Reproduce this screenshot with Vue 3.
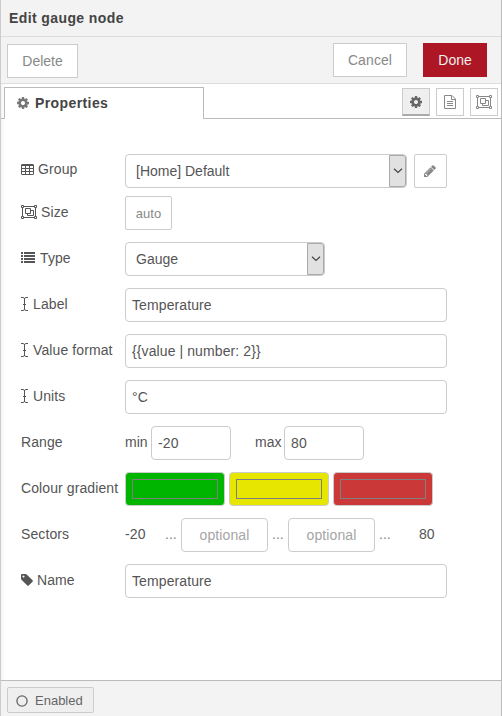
<script setup>
import { ref, h } from 'vue'

const COG = 'M1152 896q0-106-75-181t-181-75-181 75-75 181 75 181 181 75 181-75 75-181zm512-109v222q0 12-8 23t-20 13l-185 28q-19 54-39 91 35 50 107 138 10 12 10 25t-9 23q-27 37-99 108t-94 71q-12 0-26-9l-138-108q-44 23-91 38-16 136-29 186-7 28-36 28h-222q-14 0-24.500-8.500t-11.500-21.500l-28-184q-49-16-90-37l-141 107q-10 9-25 9-14 0-25-11-126-114-165-168-7-10-7-23 0-12 8-23 15-21 51-66.500t54-70.500q-27-50-41-99l-183-27q-13-2-21-12.500t-8-23.500v-222q0-12 8-23t19-13l186-28q14-46 39-92-40-57-107-138-10-12-10-24 0-10 9-23 26-36 98.500-107.500t94.500-71.500q13 0 26 10l138 107q44-23 91-38 16-136 29-186 7-28 36-28h222q14 0 24.500 8.500t11.500 21.500l28 184q49 16 90 37l142-107q9-9 24-9 13 0 25 10 129 119 165 170 7 8 7 22 0 12-8 23-15 21-51 66.500t-54 70.500q26 50 41 98l183 28q13 2 21 12.500t8 23.500z'
const PENCIL = 'M491 1536l91-91-235-235-91 91v107h128v128h107zm523-928q0-22-22-22-10 0-17 7l-542 542q-7 7-7 17 0 22 22 22 10 0 17-7l542-542q7-7 7-17zm-54-192l416 416-832 832h-416v-416zm683 96q0 53-37 90l-166 166-416-416 166-165q36-38 90-38 53 0 91 38l235 234q37 39 37 91z'
const TAG = 'M576 448q0-53-37.500-90.500t-90.500-37.500-90.500 37.500-37.500 90.500 37.500 90.500 90.500 37.500 90.500-37.500 37.500-90.500zm1067 576q0 53-37 90l-491 492q-39 37-91 37-53 0-90-37l-715-716q-38-37-64.500-101t-26.500-117v-416q0-52 38-90t90-38h416q53 0 117 26.500t102 64.500l715 714q37 39 37 91z'

const line = d => h('path', { d, fill: 'none', stroke: 'currentColor' })
const solid = d => h('path', { d, fill: 'currentColor' })

const ICONS = {
  cog: { w: 12, h: 14, box: '128 0 1536 1792', draw: () => [solid(COG)] },
  pencil: { w: 12, h: 14, box: '128 0 1536 1792', draw: () => [solid(PENCIL)] },
  tag: { w: 12, h: 14, box: '128 0 1536 1792', draw: () => [solid(TAG)] },
  table: { w: 13, h: 14, draw: () => [line('M1 2.500H12Q12.500 2.500 12.500 3V12Q12.500 12.500 12 12.500H1Q.5 12.500 .5 12V3Q.5 2.500 1 2.500ZM0 3.500H13M0 6.500H13M0 9.500H13M4.500 4V12M8.500 4V12')] },
  group: { w: 16, h: 14, draw: () => [line('M.5 .5h2v2h-2zM13.500 .5h2v2h-2zM.5 11.500h2v2h-2zM13.500 11.500h2v2h-2zM3 1.500H13M3 12.500H13M1.500 3V11M14.500 3V11M4.500 3.500H9.500V8.500H4.500ZM10 5.500H12.500V10.500H6.500V9')] },
  list: { w: 14, h: 14, draw: () => [solid('M0 1h2v2h-2zM3 1h11v2h-11zM0 4h2v2h-2zM3 4h11v2h-11zM0 7h2v2h-2zM3 7h11v2h-11zM0 10h2v2h-2zM3 10h11v2h-11z')] },
  cursor: { w: 7, h: 14, draw: () => [line('M0 .5H2.200Q3.500 .7 3.500 2Q3.500 .7 4.800 .5H7M0 13.500H2.200Q3.500 13.300 3.500 12Q3.500 13.300 4.800 13.500H7M3.500 1.500V12.500M2 7.500H5')] },
  file: { w: 12, h: 14, draw: () => [line('M.5 .5H8L11.500 4V13.500H.5ZM7.500 .5V4.500H11.500M3 6.500H9M3 8.500H9M3 10.500H9')] },
  ring: { w: 12, h: 12, draw: () => [h('circle', { cx: 6, cy: 6, r: 5.100, fill: 'none', stroke: 'currentColor', 'stroke-width': 1.300 })] },
  chevron: { w: 10, h: 6, draw: () => [h('path', { d: 'M1 .8L5 4.500L9 .8', fill: 'none', stroke: 'currentColor', 'stroke-width': 1.200 })] }
}

const Icon = ({ name }) => {
  const i = ICONS[name]
  return h('svg', { width: i.w, height: i.h, viewBox: i.box || `0 0 ${i.w} ${i.h}`, 'aria-hidden': 'true' }, i.draw())
}
Icon.props = ['name']

const label = ref('Temperature')
const format = ref('{{value | number: 2}}')
const units = ref('°C')
const min = ref('-20')
const max = ref('80')
const name = ref('Temperature')
const colours = ref(['#00b500', '#e6e600', '#ca3838'])
</script>

<template>
  <main class="tray">
    <header class="title">Edit gauge node</header>

    <div class="toolbar">
      <button class="btn delete">Delete</button>
      <button class="btn cancel">Cancel</button>
      <button class="btn done">Done</button>
    </div>

    <nav class="tabs">
      <div class="lead"></div>
      <div class="tab"><Icon name="cog" /><span>Properties</span></div>
      <div class="tools">
        <button class="tool active"><Icon name="cog" /></button>
        <button class="tool"><Icon name="file" /></button>
        <button class="tool"><Icon name="group" /></button>
      </div>
    </nav>

    <form class="form" @submit.prevent>
      <div class="row first">
        <label class="raised"><Icon name="table" />Group</label>
        <div class="select wide"><span>[Home] Default</span><i><Icon name="chevron" /></i></div>
        <button class="square edit"><Icon name="pencil" /></button>
      </div>
      <div class="row">
        <label class="tight"><Icon name="group" />Size</label>
        <button class="square auto">auto</button>
      </div>
      <div class="row">
        <label><Icon name="list" />Type</label>
        <div class="select"><span>Gauge</span><i><Icon name="chevron" /></i></div>
      </div>
      <div class="row">
        <label><Icon name="cursor" />Label</label>
        <input v-model="label" class="field">
      </div>
      <div class="row">
        <label><Icon name="cursor" />Value format</label>
        <input v-model="format" class="field">
      </div>
      <div class="row">
        <label><Icon name="cursor" />Units</label>
        <input v-model="units" class="field">
      </div>
      <div class="row">
        <label>Range</label>
        <span class="min">min</span><input v-model="min" class="field number">
        <span class="max">max</span><input v-model="max" class="field number">
      </div>
      <div class="row swatches">
        <label>Colour gradient</label>
        <div v-for="c in colours" :key="c" class="swatch" :style="{ background: c }"><div></div></div>
      </div>
      <div class="row">
        <label>Sectors</label>
        <span class="low">{{ min }}</span>
        <span class="dots">...</span>
        <input class="field sector" placeholder="optional">
        <span class="dots mid">...</span>
        <input class="field sector" placeholder="optional">
        <span class="dots end">...</span>
        <span class="high">{{ max }}</span>
      </div>
      <div class="row">
        <label class="tight"><Icon name="tag" />Name</label>
        <input v-model="name" class="field">
      </div>
    </form>

    <footer class="footer">
      <button class="enabled"><Icon name="ring" />Enabled</button>
    </footer>
  </main>
</template>

<style>
body { margin: 0; }
</style>

<style scoped>
* { box-sizing: border-box; }
.tray {
  width: 502px;
  height: 716px;
  display: flex;
  flex-direction: column;
  overflow: hidden;
  border-left: 1px solid #ccc;
  border-right: 1px solid #bbb;
  background: linear-gradient(to right, #f4f4f4, #fff 4px);
  color: #555;
  font: 14px/20px "Liberation Sans", Arial, sans-serif;
}
button, input { font: inherit; margin: 0; outline: none; }
svg { display: block; flex: none; }
.title {
  height: 37px;
  padding: 8px;
  background: #f3f3f3;
  border-bottom: 1px solid #ddd;
  color: #444;
  font-weight: bold;
  letter-spacing: 0.4px;
}
.toolbar {
  height: 47px;
  padding: 6px 14px 0 6px;
  display: flex;
  background: #f3f3f3;
  border-bottom: 1px solid #ddd;
}
.btn {
  height: 34px;
  padding: 0;
  border: 1px solid #ccc;
  background: #fff;
  color: #888;
}
.delete { width: 71px; margin-top: 1px; }
.cancel { width: 74px; margin-left: auto; letter-spacing: 0.1px; }
.done { width: 64px; margin-left: 16px; border-color: #ad1625; background: #ad1625; color: #eee; }
.tabs { height: 35px; display: flex; align-items: flex-end; }
.lead { width: 3px; height: 1px; background: #bbb; }
.tab {
  width: 200px;
  height: 32px;
  padding: 0 12px 1px;
  display: flex;
  align-items: center;
  gap: 6px;
  border: 1px solid #bbb;
  border-bottom: 0;
  background: #fff;
  color: #444;
  font-weight: bold;
  letter-spacing: 0.4px;
}
.tab svg { color: #777; }
.tools {
  flex: 1;
  height: 35px;
  padding: 4px 3px 0 0;
  display: flex;
  justify-content: flex-end;
  gap: 6px;
  border-bottom: 1px solid #bbb;
}
.tool {
  width: 28px;
  height: 28px;
  padding: 0;
  display: flex;
  align-items: center;
  justify-content: center;
  border: 1px solid #ccc;
  background: #fff;
  color: #888;
}
.active { background: #efefef; border-bottom: 2px solid #aaa; color: #666; }
.form {
  flex: 1;
  padding: 35px 0 0 20px;
  display: flex;
  flex-direction: column;
  gap: 12px;
}
.row { height: 34px; display: flex; flex: none; }
.first { margin-bottom: -4px; }
label {
  width: 104px;
  height: 32px;
  display: flex;
  align-items: center;
  gap: 5px;
  flex: none;
  white-space: nowrap;
  letter-spacing: 0.1px;
}
.raised { height: 30px; gap: 4px; }
.tight { gap: 4px; }
.field {
  width: 322px;
  height: 34px;
  padding: 0 6px;
  border: 1px solid #ccc;
  border-radius: 4px;
  background: #fff;
  color: #555;
  letter-spacing: 0.1px;
}
.number { width: 80px; }
.sector { width: 87px; text-align: center; }
.field::placeholder { color: #a5a5a5; opacity: 1; }
.select {
  width: 200px;
  height: 34px;
  padding-left: 10px;
  display: flex;
  align-items: center;
  justify-content: space-between;
  border: 1px solid #ccc;
  border-radius: 4px;
}
.wide { width: 282px; }
.select i {
  width: 17px;
  height: 32px;
  padding-bottom: 1px;
  display: flex;
  align-items: center;
  justify-content: center;
  border: 1px solid #aaa;
  border-radius: 0 3px 3px 0;
  background: #e1e1e1;
  color: #444;
}
.square {
  height: 34px;
  padding: 0;
  display: flex;
  align-items: center;
  justify-content: center;
  border: 1px solid #ccc;
  border-radius: 2px;
  background: #fff;
  color: #888;
}
.edit { width: 33px; padding-right: 1px; margin-left: 7px; }
.auto { width: 47px; padding-top: 1px; font-size: 13px; }
.row > span { line-height: 32px; }
.min { width: 26px; }
.max { width: 29px; margin-left: 24px; }
.swatches { gap: 4px; }
.swatches label { margin-right: -4px; }
.swatch {
  width: 100px;
  height: 34px;
  padding: 6px;
  border: 1px solid #ccc;
  border-radius: 4px;
}
.swatch div { height: 20px; border: 1px solid #808080; }
.low { width: 40px; letter-spacing: 0.2px; }
.dots { width: 16px; color: #888; }
.mid { width: 20px; padding-left: 4px; }
.end { width: 44px; padding-left: 4px; }
.footer {
  height: 36px;
  padding: 6px;
  border-top: 1px solid #bbb;
  background: #f3f3f3;
}
.enabled {
  width: 87px;
  height: 26px;
  padding: 1px 0 0 8px;
  display: flex;
  align-items: center;
  gap: 7px;
  border: 1px solid #ccc;
  border-radius: 2px;
  background: #efefef;
  color: #666;
  font-size: 13px;
}
</style>
